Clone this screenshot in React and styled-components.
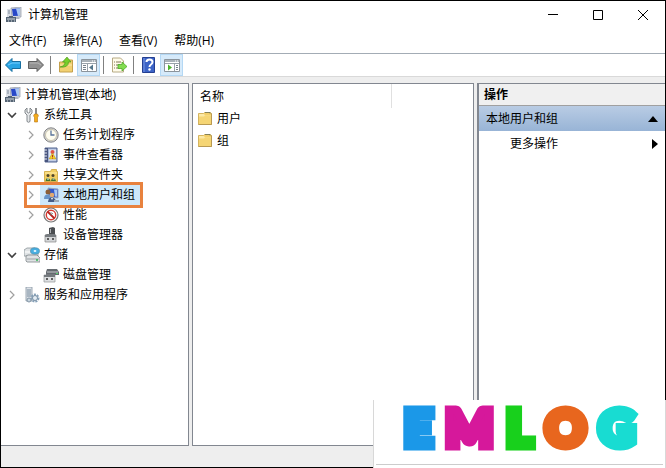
import React from "react";
import styled, { createGlobalStyle } from "styled-components";

const GlobalStyle = createGlobalStyle`
  * {
    box-sizing: border-box;
  }

  body {
    margin: 0;
    color: #000;
    font-family: "Open Sans", "Noto Sans CJK SC", sans-serif;
    font-size: 12px;
    line-height: 20px;
  }

  button {
    padding: 0;
    border: none;
    background: none;
    color: inherit;
    font: inherit;
    text-align: left;
  }

  svg {
    display: block;
    flex: none;
  }
`;

const Window = styled.div`
  position: relative;
  display: flex;
  flex-direction: column;
  height: 100vh;
  border: 1px solid #000;
  background-color: #fff;
`;

const TitleBar = styled.header`
  display: flex;
  align-items: center;
  gap: 6px;
  height: 28px;
  padding: 0 3px 0 5px;
`;

const Title = styled.h1`
  flex: 1;
  margin: 0;
  font-size: 12px;
  font-weight: normal;
`;

const WindowButton = styled.button`
  display: flex;
  align-items: center;
  justify-content: center;
  width: 39px;
  height: 28px;
`;

const MenuBar = styled.nav`
  display: flex;
  align-items: center;
  gap: 17px;
  height: 24px;
  padding-left: 8px;
`;

const MenuItem = styled.button`
  white-space: nowrap;
`;

const ToolBar = styled.div`
  display: flex;
  align-items: center;
  height: 24px;
  border-top: 1px solid #a3acb5;
  border-bottom: 1px solid #d9d9d9;
`;

const ToolButton = styled.button`
  display: flex;
  align-items: center;
  justify-content: center;
  width: 23px;
  height: 22px;
  border: 1px solid ${(props) => (props.$active ? "#b4d8f4" : "transparent")};
  background-color: ${(props) => (props.$active ? "#d6eafa" : "transparent")};
`;

const Separator = styled.span`
  width: 1px;
  height: 18px;
  margin: 0 3px;
  background-color: #808080;
`;

const Panes = styled.main`
  display: grid;
  flex: 1;
  grid-template-columns: 188fr 282fr 188fr;
  gap: 3px;
  min-height: 0;
  padding-top: 6px;
  background-color: #eee;
`;

const Pane = styled.section`
  min-width: 0;
  overflow: hidden;
  border: 1px solid #828790;
  border-left-width: ${(props) => (props.$first ? "0" : props.$last ? "2px" : "1px")};
  border-right-width: ${(props) => (props.$last ? "0" : "1px")};
  background-color: #fff;
`;

const Tree = styled.ul`
  margin: 0;
  padding: 1px 0 0;
  list-style: none;
`;

const TreeRow = styled.li`
  display: flex;
  align-items: center;
  height: 20px;
  padding-left: ${(props) => props.$level * 19 + 4}px;
`;

const Expander = styled.button`
  display: flex;
  align-items: center;
  justify-content: center;
  width: 13px;
  height: 16px;
  margin-right: 6px;
`;

const Blank = styled.span`
  width: 19px;
`;

const TreeLabel = styled.button`
  display: flex;
  align-items: center;
  gap: 4px;
  white-space: nowrap;
`;

const Highlight = styled.div`
  display: flex;
  align-items: center;
  height: 26px;
  padding-right: 5px;
  border: 3px solid #e8823e;
  background: linear-gradient(90deg, #fff 13px, #cde8fa 13px);

  ${Expander} {
    margin-left: -3px;
  }
`;

const List = styled.table`
  width: 100%;
  border-collapse: collapse;
`;

const ListHead = styled.th`
  height: 24px;
  padding: 2px 0 0 7px;
  border-right: 1px solid #e0e0e0;
  font-weight: normal;
  text-align: left;
`;

const ListCell = styled.td`
  height: 22px;
  padding: 0 0 0 4px;
`;

const ActionHeader = styled.h2`
  height: 22px;
  margin: 0;
  padding-left: 5px;
  border-bottom: 1px solid #a0a0a0;
  background-color: #f0f0f0;
  font-size: 12px;
  line-height: 22px;
`;

const ActionRow = styled.button`
  display: flex;
  align-items: center;
  justify-content: space-between;
  width: 100%;
  height: 25px;
  padding-right: 7px;
  padding-left: ${(props) => (props.$group ? "7px" : "31px")};
  background: ${(props) =>
    props.$group ? "linear-gradient(#b9cce4, #98b4d6)" : "none"};
`;

const StatusBar = styled.footer`
  height: 21px;
  background-color: #eee;
`;

const Watermark = styled.div`
  position: absolute;
  right: -1px;
  bottom: -1px;
  width: 293px;
  height: 68px;
  padding: 0 2px 3px;
  border: solid #d8d8d8;
  border-width: 0 1px;
  background-color: #fff;
`;

const Brand = styled.div`
  display: flex;
  align-items: center;
  justify-content: center;
  gap: 13px;
  height: 65px;
  padding-bottom: 10px;
  border-bottom: 1px solid #ccc;
  font-family: Lato, sans-serif;
  font-size: 50px;
  font-weight: 900;
  line-height: 54px;
`;

const Letter = styled.span`
  color: ${(props) => props.$color};
  -webkit-text-stroke: 9px ${(props) => props.$color};
`;

const Icon = ({ size = 16, children }) => (
  <svg width={size} height={size} viewBox="0 0 16 16" aria-hidden="true">
    {children}
  </svg>
);

const ComputerIcon = () => (
  <Icon>
    <path d="M5 1l10-1v10l-9 1z" fill="#d3d6dc" stroke="#8e96a3" strokeWidth=".7" />
    <path d="M6 2l8-.7v7.500L7 9z" fill="#2848c8" />
    <path d="M10 1.600l4-.3v7.500l-2 .2z" fill="#a8c6f2" />
    <path d="M1 2h4v8H1z" fill="#d9dde4" />
    <path d="M2 4h2M2 6h2" stroke="#7f8998" />
    <path d="M8 10h4l2 2H8z" fill="#b3b8c1" />
    <path d="M0 10h10v5H0z" fill="#566575" />
    <path d="M3 9h4v2H3z" fill="#566575" />
    <path d="M1 12h8M2 14h1M5 14h1M8 14h1" stroke="#d7dce2" />
  </Icon>
);

const ToolsIcon = () => (
  <Icon>
    <path
      d="M3 1v4l1.500 1L6 5V1l2 2v3L6 8v6.500q-1.500 1.500-3 0V8L1 6V3z"
      fill="#e6e8ea"
      stroke="#777d82"
      strokeWidth=".9"
    />
    <path d="M12 1v7" stroke="#666" strokeWidth="1.500" />
    <path d="M10.500 7h3l1 2-1 1v5h-3v-5l-1-1z" fill="#f4ad1c" stroke="#b87410" strokeWidth=".6" />
  </Icon>
);

const ClockIcon = () => (
  <Icon>
    <circle cx="8" cy="8" r="7.200" fill="#d6d7d9" stroke="#777" strokeWidth=".9" />
    <circle cx="8" cy="8" r="5.500" fill="#fffdf0" stroke="#b5ac8b" strokeWidth=".6" />
    <path d="M8 3.500V8h3.500" fill="none" stroke="#58739b" strokeWidth="1.300" />
  </Icon>
);

const EventIcon = () => (
  <Icon>
    <path d="M2 1h12v14H2z" fill="#a7b6d6" stroke="#52648f" />
    <path d="M2 1h3v14H2z" fill="#48557e" />
    <path d="M1 3h3M1 6h3M1 9h3M1 12h3" stroke="#e6e9f2" />
    <path d="M6 2.500h7v11H6z" fill="#dee6f4" />
    <circle cx="9.500" cy="5" r="2" fill="#e25345" />
    <path d="M9.500 6l3.500 6H6z" fill="#f4cf27" stroke="#b18b1a" strokeWidth=".5" />
    <path d="M9.500 8v2M9.500 10.700v.8" stroke="#b32b26" />
  </Icon>
);

const SharedIcon = () => (
  <Icon>
    <path d="M1.500 4.500h6l1-2h5v2h1v10h-13z" fill="#f3cf62" stroke="#cda43a" strokeWidth=".8" />
    <path d="M2 6h12" stroke="#fff0b0" />
    <circle cx="5" cy="8.500" r="1.500" fill="#4f462e" />
    <circle cx="10" cy="8.500" r="1.500" fill="#4f462e" />
    <path d="M2.500 14q.5-3.500 2.500-3t2.500 3zM8 14q.5-3.500 2.500-3t2.500 3z" fill="#43752d" />
    <path d="M4 12h2M9.500 12h2" stroke="#eee" />
  </Icon>
);

const UsersIcon = () => (
  <Icon>
    <path d="M5 1l10 1v9l-9-1z" fill="#335bcc" stroke="#9aa7bc" />
    <path d="M11 2.500l3 .3v7l-2-.2z" fill="#a8c9f5" />
    <circle cx="5" cy="5" r="2.500" fill="#8b6038" />
    <path d="M1 12q0-5 4-4.500t4 4.500z" fill="#6795c9" />
    <circle cx="9" cy="8" r="2.300" fill="#e1aa70" />
    <path d="M5 15q.5-5 4-4.500 4 .5 4 4.500z" fill="#445b85" />
    <path d="M8 11l1 2 1-2z" fill="#fff" />
    <path d="M11 13h5v2h-5z" fill="#9eabb7" />
  </Icon>
);

const PerformanceIcon = () => (
  <Icon>
    <circle cx="8" cy="8" r="7" fill="#f8f8f8" stroke="#777" strokeWidth="1.200" />
    <circle cx="8" cy="8" r="4.700" fill="#fff" stroke="#d83a30" strokeWidth="1.400" />
    <path d="M4.500 4.500l7 7" stroke="#b72520" strokeWidth="1.800" />
    <path d="M8 5v3l2-2" fill="none" stroke="#767676" strokeWidth=".8" />
  </Icon>
);

const DeviceIcon = () => (
  <Icon>
    <path d="M6 1l4-1 2 1v8H6z" fill="#4b4e51" />
    <path d="M7.500 2v4" stroke="#aeb1b4" />
    <path d="M2 8h11v7H2z" fill="#d4d6d8" stroke="#888" strokeWidth=".7" />
    <path d="M2 8l2-1h7l2 1v2H2z" fill="#777b7f" />
    <path d="M5 11v2M10 11v2" stroke="#333" strokeWidth="1.500" />
  </Icon>
);

const StorageIcon = () => (
  <Icon>
    <path d="M0 3l3-2h8l3 3v5H0z" fill="#dfe3e5" stroke="#8c9499" strokeWidth=".8" />
    <ellipse cx="11" cy="4" rx="4.500" ry="3.300" fill="#48aee0" stroke="#4986a3" strokeWidth=".6" />
    <ellipse cx="11" cy="4" rx="1.400" ry="1" fill="#e8f8ff" />
    <path d="M2 9l2-1h9l3 3v4H3l-1-1z" fill="#dfe2e4" stroke="#7e8589" strokeWidth=".8" />
    <path d="M3 12h12" stroke="#9ba1a5" />
    <path d="M12 13h2" stroke="#31b653" strokeWidth="1.500" />
    <path d="M1 5h5" stroke="#fff" />
  </Icon>
);

const DiskIcon = () => (
  <Icon>
    <path d="M4 2h10l2 3v3H3V5z" fill="#666b70" />
    <path d="M4 5h11" stroke="#c7cbce" />
    <path d="M13 6.500h2" stroke="#55d56b" />
    <path d="M1 8h11v7H1z" fill="#dee0e2" stroke="#949799" strokeWidth=".7" />
    <path d="M1 8h11v2H1z" fill="#757a7e" />
    <path d="M4 11v2M9 11v2" stroke="#333" strokeWidth="1.500" />
  </Icon>
);

const ServicesIcon = () => (
  <Icon>
    <path d="M2 0h6v14H2z" fill="#dce1e7" stroke="#8794a2" strokeWidth=".8" />
    <path d="M3 3h4M3 5h4M3 7h4M3 9h4" stroke="#778b9d" />
    <circle cx="11" cy="11" r="3.500" fill="none" stroke="#85a0b8" strokeWidth="2" strokeDasharray="2 1" />
    <circle cx="11" cy="11" r="2.500" fill="#e4edf4" stroke="#788fa4" />
    <circle cx="5" cy="13" r="2" fill="#c8d5df" stroke="#8295a5" />
  </Icon>
);

const FolderIcon = () => (
  <Icon>
    <path d="M1.500 2.500h5l1-1h6v1h1v11h-13z" fill="#f3cf69" stroke="#d0ae55" strokeWidth=".9" />
    <path d="M2 3h5l1 1.500h6V6H2z" fill="#fce9a5" />
    <path d="M2 5.500h5l1-1h6V13H2z" fill="#f5d574" />
    <path d="M8 1.500h5v1" fill="none" stroke="#6d7358" strokeWidth=".8" />
    <path d="M1.500 13.500h13v-11" fill="none" stroke="#b99a52" />
  </Icon>
);

const ArrowIcon = ({ forward }) => (
  <Icon>
    <path
      d={forward ? "M15.500 8L9 1.500v3H.5v7H9v3z" : "M.5 8L7 1.500v3h8.500v7H7v3z"}
      fill={forward ? "#929292" : "#28a4e4"}
      stroke={forward ? "#606060" : "#176e9f"}
    />
    <path d={forward ? "M2 6h8l3 2" : "M3 8l4-2h8"} fill="none" stroke={forward ? "#b8b8b8" : "#74ceff"} />
  </Icon>
);

const UpIcon = () => (
  <Icon>
    <path d="M1.500 5h6l1-2h6v12h-13z" fill="#f2d071" stroke="#c4a04c" />
    <path d="M2 8h12" stroke="#fae9ad" />
    <path d="M2 10q5-1 5-5H4.500L9 0l4 5h-2.500q0 6-8.500 5z" fill="#78ce2b" stroke="#429318" strokeWidth=".6" />
  </Icon>
);

const PanelIcon = ({ flip }) => (
  <Icon>
    <path d="M.5 2.500h15v12H.5z" fill="#fff" stroke="#8b949c" />
    <path d="M1 3h14v2H1z" fill="#a9b2b9" />
    <path d="M11 4h1M13 4h1" stroke="#fff" />
    <path d={flip ? "M10.500 6v8M1 6.500h14" : "M6.500 6v8M1 6.500h14"} stroke="#99a2aa" />
    <path d={flip ? "M12 8.500h2M12 10.500h2M12 12.500h2" : "M2 8.500h3M2 10.500h3M2 12.500h3"} stroke="#77828c" />
    <path d={flip ? "M4 7.500l4 3-4 3z" : "M12 7.500l-4 3 4 3z"} fill={flip ? "#4db42c" : "#55778b"} />
  </Icon>
);

const ExportIcon = () => (
  <Icon>
    <path d="M1.500 1h8l3 3v11h-11z" fill="#fffbe9" stroke="#b6aa84" />
    <path d="M3 5h1M3 8h1M3 11h1M5 5h5M5 8h4M5 11h4" stroke="#80755b" />
    <path d="M7 7.500h4V5l5 4.500-5 4.500v-2.500H7z" fill="#83dc50" stroke="#43a51f" strokeWidth=".7" />
  </Icon>
);

const HelpIcon = () => (
  <Icon>
    <path d="M1.500.5h12v15h-12z" fill="#3c63c6" stroke="#243f91" />
    <path d="M3 1v14" stroke="#7897e5" />
    <path d="M5.500 5q0-2.500 3-2.500 3 0 3 2.500 0 1.500-1.500 2.500T8.500 10" fill="none" stroke="#fff" strokeWidth="2" />
    <circle cx="8.500" cy="12.500" r="1.200" fill="#fff" />
  </Icon>
);

const Chevron = ({ open }) => (
  <svg width="10" height="10" viewBox="0 0 10 10" aria-hidden="true">
    <path
      d={open ? "M1 3l4 4 4-4" : "M3 1l4 4-4 4"}
      fill="none"
      stroke={open ? "#404040" : "#a0a0a0"}
      strokeWidth={open ? "1.600" : "1.200"}
    />
  </svg>
);

const treeItems = [
  { label: "系统工具", level: 0, state: "open", icon: <ToolsIcon /> },
  { label: "任务计划程序", level: 1, state: "closed", icon: <ClockIcon /> },
  { label: "事件查看器", level: 1, state: "closed", icon: <EventIcon /> },
  { label: "共享文件夹", level: 1, state: "closed", icon: <SharedIcon /> },
  { label: "本地用户和组", level: 1, state: "closed", icon: <UsersIcon />, selected: true },
  { label: "性能", level: 1, state: "closed", icon: <PerformanceIcon /> },
  { label: "设备管理器", level: 1, icon: <DeviceIcon /> },
  { label: "存储", level: 0, state: "open", icon: <StorageIcon /> },
  { label: "磁盘管理", level: 1, icon: <DiskIcon /> },
  { label: "服务和应用程序", level: 0, state: "closed", icon: <ServicesIcon /> },
];

const brandLetters = [
  ["E", "#1b98e8"],
  ["M", "#d6189b"],
  ["L", "#18d01c"],
  ["O", "#e8661e"],
  ["G", "#18dcd2"],
];

const TreeItem = ({ label, level, state, icon, selected }) => {
  const content = (
    <>
      {state ? (
        <Expander aria-label={label} aria-expanded={state === "open"}>
          <Chevron open={state === "open"} />
        </Expander>
      ) : (
        <Blank />
      )}
      <TreeLabel>
        {icon}
        {label}
      </TreeLabel>
    </>
  );

  return (
    <TreeRow $level={level}>
      {selected ? <Highlight>{content}</Highlight> : content}
    </TreeRow>
  );
};

const App = () => {
  return (
    <>
      <GlobalStyle />
      <Window>
        <TitleBar>
          <ComputerIcon />
          <Title>计算机管理</Title>
          <WindowButton aria-label="最小化">
            <svg width="10" height="10" viewBox="0 0 10 10">
              <path d="M0 4.500h10" stroke="#000" />
            </svg>
          </WindowButton>
          <WindowButton aria-label="最大化">
            <svg width="10" height="10" viewBox="0 0 10 10">
              <path d="M.5.5h9v9h-9z" fill="none" stroke="#000" />
            </svg>
          </WindowButton>
          <WindowButton aria-label="关闭">
            <svg width="10" height="10" viewBox="0 0 10 10">
              <path d="M0 0l10 10M10 0L0 10" stroke="#000" />
            </svg>
          </WindowButton>
        </TitleBar>
        <MenuBar>
          <MenuItem>文件(F)</MenuItem>
          <MenuItem>操作(A)</MenuItem>
          <MenuItem>查看(V)</MenuItem>
          <MenuItem>帮助(H)</MenuItem>
        </MenuBar>
        <ToolBar>
          <ToolButton aria-label="后退">
            <ArrowIcon />
          </ToolButton>
          <ToolButton aria-label="前进">
            <ArrowIcon forward />
          </ToolButton>
          <Separator />
          <ToolButton aria-label="向上">
            <UpIcon />
          </ToolButton>
          <ToolButton $active aria-label="控制台树">
            <PanelIcon />
          </ToolButton>
          <Separator />
          <ToolButton aria-label="导出列表">
            <ExportIcon />
          </ToolButton>
          <Separator />
          <ToolButton aria-label="帮助">
            <HelpIcon />
          </ToolButton>
          <ToolButton $active aria-label="操作窗格">
            <PanelIcon flip />
          </ToolButton>
        </ToolBar>
        <Panes>
          <Pane $first>
            <Tree>
              <TreeRow $level={0}>
                <TreeLabel>
                  <ComputerIcon />
                  计算机管理(本地)
                </TreeLabel>
              </TreeRow>
              {treeItems.map((item) => (
                <TreeItem key={item.label} {...item} />
              ))}
            </Tree>
          </Pane>
          <Pane>
            <List>
              <colgroup>
                <col width="71%" />
                <col />
              </colgroup>
              <thead>
                <tr>
                  <ListHead>名称</ListHead>
                  <td />
                </tr>
              </thead>
              <tbody>
                {["用户", "组"].map((name) => (
                  <tr key={name}>
                    <ListCell colSpan={2}>
                      <TreeLabel>
                        <FolderIcon />
                        {name}
                      </TreeLabel>
                    </ListCell>
                  </tr>
                ))}
              </tbody>
            </List>
          </Pane>
          <Pane $last>
            <ActionHeader>操作</ActionHeader>
            <ActionRow $group>
              本地用户和组
              <svg width="10" height="6" viewBox="0 0 10 6">
                <path d="M5 0l5 6H0z" />
              </svg>
            </ActionRow>
            <ActionRow>
              更多操作
              <svg width="6" height="10" viewBox="0 0 6 10">
                <path d="M0 0l6 5-6 5z" />
              </svg>
            </ActionRow>
          </Pane>
        </Panes>
        <StatusBar />
        <Watermark>
          <Brand>
            {brandLetters.map(([letter, color]) => (
              <Letter key={letter} $color={color}>
                {letter}
              </Letter>
            ))}
          </Brand>
        </Watermark>
      </Window>
    </>
  );
};

export default App;
